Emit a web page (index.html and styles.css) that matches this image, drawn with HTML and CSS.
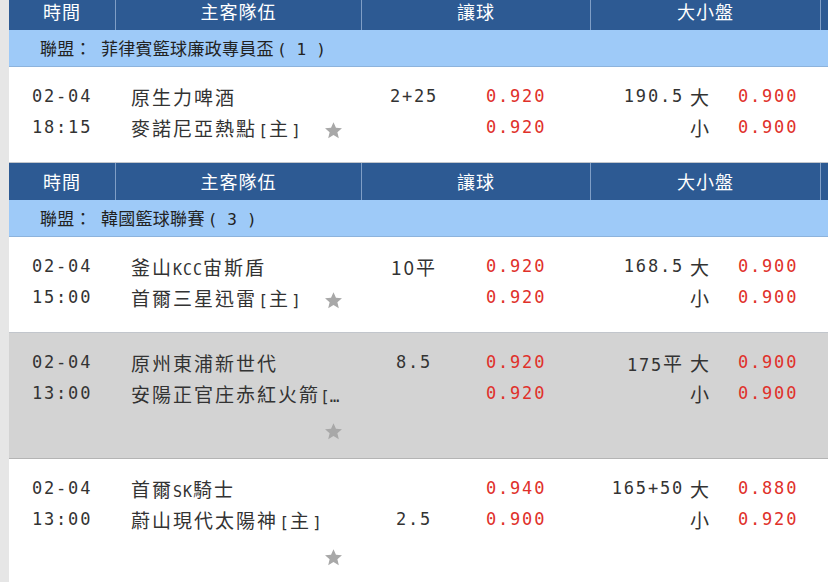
FILE: index.html
```html
<!DOCTYPE html>
<html lang="zh-Hant">
  <head>
    <meta charset="UTF-8" />
    <meta name="viewport" content="width=device-width, initial-scale=1.0" />
    <title>籃球賠率</title>
    <link rel="stylesheet" href="styles.css">
  </head>
  <body>
    <div class="page">
      <!-- 菲律賓 -->
      <div class="thead">
        <div class="th">時間</div>
        <div class="th">主客隊伍</div>
        <div class="th">讓球</div>
        <div class="th">大小盤</div>
        <div class="th"></div>
      </div>
      <div class="league-name">聯盟：<span class="sp"></span>菲律賓籃球廉政專員盃<span class="mono">(1)</span></div>
      <div class="match">
        <div class="c-time mono"><div>02-04</div><div>18:15</div></div>
        <div class="c-team">
          <div>原生力啤酒</div>
          <div class="home"><span>麥諾尼亞熱點<span class="br">[</span>主<span class="br">]</span></span><svg class="star" viewBox="0 0 24 24"><path d="M12 1.5l3.1 7.1 7.6.6-5.8 5 1.8 7.5L12 17.8l-6.7 3.9 1.8-7.5-5.8-5 7.6-.6z"/></svg></div>
        </div>
        <div class="c-hdp">
          <span class="val mono">2+25</span><span class="odds">0.920</span>
          <span class="val"></span><span class="odds">0.920</span>
        </div>
        <div class="c-ou">
          <span class="val mono">190.5</span><span class="side">大</span><span class="odds">0.900</span>
          <span class="val"></span><span class="side">小</span><span class="odds">0.900</span>
        </div>
        <div></div>
      </div>

      <!-- 韓國 -->
      <div class="thead">
        <div class="th">時間</div>
        <div class="th">主客隊伍</div>
        <div class="th">讓球</div>
        <div class="th">大小盤</div>
        <div class="th"></div>
      </div>
      <div class="league-name">聯盟：<span class="sp"></span>韓國籃球聯賽<span class="mono">(3)</span></div>
      <div class="match">
        <div class="c-time mono"><div>02-04</div><div>15:00</div></div>
        <div class="c-team">
          <div>釜山<span class="en">KCC</span>宙斯盾</div>
          <div class="home"><span>首爾三星迅雷<span class="br">[</span>主<span class="br">]</span></span><svg class="star" viewBox="0 0 24 24"><path d="M12 1.5l3.1 7.1 7.6.6-5.8 5 1.8 7.5L12 17.8l-6.7 3.9 1.8-7.5-5.8-5 7.6-.6z"/></svg></div>
        </div>
        <div class="c-hdp">
          <span class="val">10平</span><span class="odds">0.920</span>
          <span class="val"></span><span class="odds">0.920</span>
        </div>
        <div class="c-ou">
          <span class="val mono">168.5</span><span class="side">大</span><span class="odds">0.900</span>
          <span class="val"></span><span class="side">小</span><span class="odds">0.900</span>
        </div>
        <div></div>
      </div>

      <div class="match grey">
        <div class="c-time mono"><div>02-04</div><div>13:00</div></div>
        <div class="c-team">
          <div>原州東浦新世代</div>
          <div>安陽正官庄赤紅火箭<span class="br">[…</span></div>
          <div class="star-line"><svg class="star" viewBox="0 0 24 24"><path d="M12 1.5l3.1 7.1 7.6.6-5.8 5 1.8 7.5L12 17.8l-6.7 3.9 1.8-7.5-5.8-5 7.6-.6z"/></svg></div>
        </div>
        <div class="c-hdp">
          <span class="val mono">8.5</span><span class="odds">0.920</span>
          <span class="val"></span><span class="odds">0.920</span>
        </div>
        <div class="c-ou">
          <span class="val"><span class="mono">175</span>平</span><span class="side">大</span><span class="odds">0.900</span>
          <span class="val"></span><span class="side">小</span><span class="odds">0.900</span>
        </div>
        <div></div>
      </div>

      <div class="match">
        <div class="c-time mono"><div>02-04</div><div>13:00</div></div>
        <div class="c-team">
          <div>首爾<span class="en">SK</span>騎士</div>
          <div>蔚山現代太陽神<span class="br">[</span>主<span class="br">]</span></div>
          <div class="star-line"><svg class="star" viewBox="0 0 24 24"><path d="M12 1.5l3.1 7.1 7.6.6-5.8 5 1.8 7.5L12 17.8l-6.7 3.9 1.8-7.5-5.8-5 7.6-.6z"/></svg></div>
        </div>
        <div class="c-hdp">
          <span class="val"></span><span class="odds">0.940</span>
          <span class="val mono">2.5</span><span class="odds">0.900</span>
        </div>
        <div class="c-ou">
          <span class="val mono">165+50</span><span class="side">大</span><span class="odds">0.880</span>
          <span class="val"></span><span class="side">小</span><span class="odds">0.920</span>
        </div>
        <div></div>
      </div>
    </div>
  </body>
</html>
```

FILE: styles.css
```css
body {
  margin: 0;
  background-color: #e6e6e6;
  font-family: "Noto Sans CJK TC", "Noto Sans", sans-serif;
  color: #333;
  overflow: hidden;
}

.page {
  margin-left: 9px;
  margin-top: -7px;
  background: #fff;
}

.mono,
.en,
.br,
.odds {
  font-family: "DejaVu Sans Mono", "Noto Sans CJK TC", monospace;
  font-size: 17px;
  letter-spacing: 1.8px;
}

.en {
  font-size: 15px;
  letter-spacing: 1px;
}

.br {
  display: inline-block;
  width: 12px;
  text-align: center;
  letter-spacing: 0;
  font-size: 16px;
}

.thead {
  display: grid;
  grid-template-columns: 106px 246px 229px 230px 1fr;
  background-color: #2d5a93;
}

.th {
  height: 37px;
  line-height: 37px;
  text-align: center;
  color: #fff;
  font-size: 18px;
  letter-spacing: 1px;
}

.th + .th {
  border-left: 1px solid #7f9ec6;
}

.league-name {
  height: 36px;
  line-height: 36px;
  background-color: #9ecaf8;
  border-bottom: 1px solid #8db3dc;
  padding-left: 31px;
  font-size: 17px;
  letter-spacing: 0.3px;
  color: #222;
}

.league-name .sp {
  display: inline-block;
  width: 9px;
}

.league-name .mono {
  font-size: 16px;
  letter-spacing: 10px;
  margin-left: 3px;
}

.match {
  display: grid;
  grid-template-columns: 106px 246px 229px 230px 1fr;
  padding: 14px 0 19px;
  border-bottom: 1px solid #c2c6cc;
  font-size: 19px;
  letter-spacing: 2px;
}

.match.grey {
  background-color: #d3d3d3;
  border-bottom-color: #b4b4b4;
  padding-bottom: 14px;
}

.c-time > div,
.c-team > div,
.val,
.side,
.odds {
  height: 31px;
  line-height: 31px;
  white-space: nowrap;
}

.c-time {
  padding-left: 23px;
}

.c-team {
  padding: 0 18px 0 16px;
}

.home {
  display: flex;
  justify-content: space-between;
  align-items: flex-start;
}

.star {
  width: 19px;
  height: 19px;
  fill: #a8a8a8;
  margin-top: 9px;
}

.c-team > .star-line {
  display: flex;
  justify-content: flex-end;
  height: 24px;
  margin-top: 11px;
}

.star-line .star {
  margin-top: 2px;
}

.c-hdp {
  display: grid;
  grid-template-columns: 106px 1fr;
  align-content: start;
}

.c-hdp .val {
  text-align: center;
}

.c-hdp .odds {
  padding-left: 19px;
}

.odds {
  color: #e0302a;
}

.c-ou {
  display: grid;
  grid-template-columns: 94px 54px 1fr;
  align-content: start;
}

.c-ou .val {
  text-align: right;
}

.c-ou .side {
  padding-left: 6px;
}
```
